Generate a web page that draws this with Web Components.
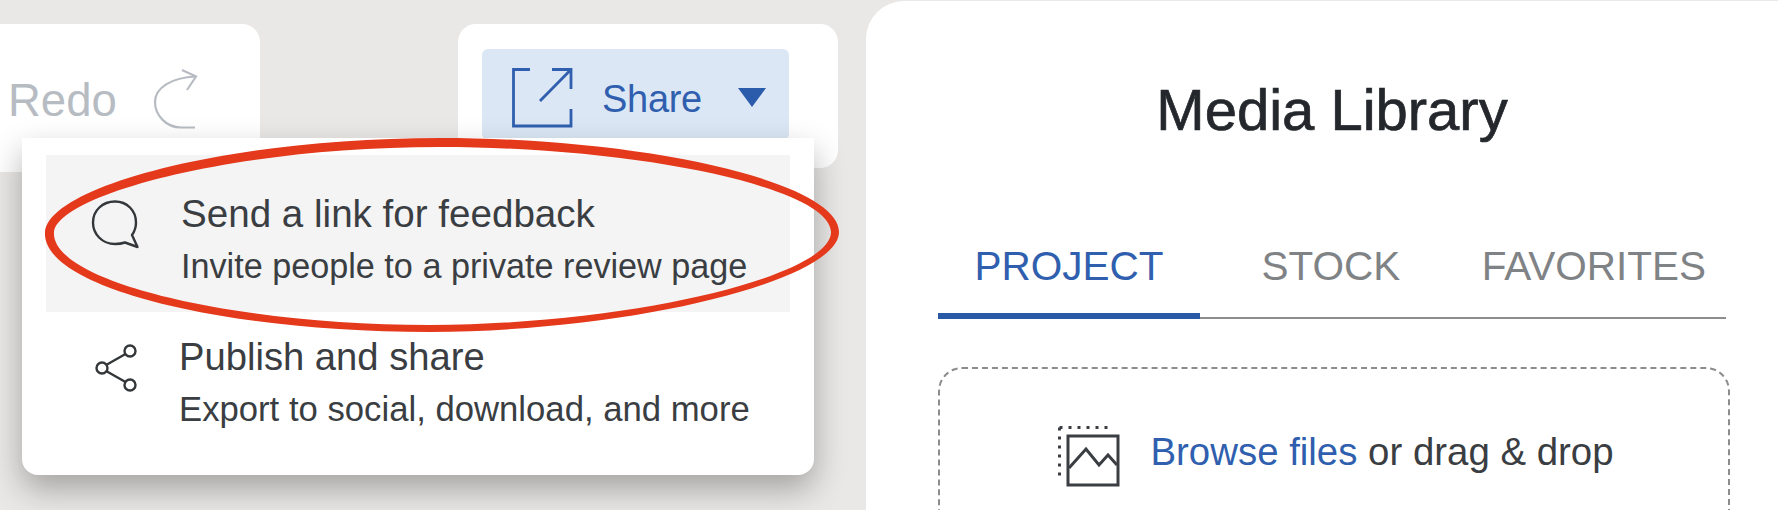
<!DOCTYPE html>
<html>
<head>
<meta charset="utf-8">
<title>Media Library</title>
<style>
  html, body { margin: 0; height: 100%; }
  body {
    background: #e9e8e6;
    overflow: hidden;
    font-family: "Liberation Sans", Arial, sans-serif;
  }
</style>
</head>
<body>
<editor-shell>
  <redo-card slot="toolbar"></redo-card>
  <share-card slot="toolbar"></share-card>
  <share-menu slot="overlay">
    <menu-item active>
      <svg slot="icon" width="52" height="52" viewBox="90 196 52 52" fill="none" stroke="#33373a" stroke-width="2.4" stroke-linejoin="round">
        <path d="M125 240.500C122 241.500 118.500 242 115 242C102.500 242 93 232.500 93 220.500C93 208.500 102.500 199.500 115 199.500C127 199.500 136 208.500 136 220.500C136 225.500 134.500 229.500 132 233L137.500 245Z"/>
      </svg>
      <span slot="title">Send a link for feedback</span>
      <span slot="sub">Invite people to a private review page</span>
    </menu-item>
    <menu-item style="--text-gap: 37px; --title-size: 38.2px; --sub-size: 34.7px">
      <svg slot="icon" width="52" height="52" viewBox="90 340 52 52" fill="none" stroke="#33373a" stroke-width="2.4">
        <circle cx="130" cy="350" r="5.500"/>
        <circle cx="102" cy="367" r="5.500"/>
        <circle cx="130" cy="384" r="5.500"/>
        <path d="M125.500 353L107 363.500M107 370.500L125.500 381"/>
      </svg>
      <span slot="title">Publish and share</span>
      <span slot="sub">Export to social, download, and more</span>
    </menu-item>
  </share-menu>
  <annotation-ring slot="overlay"></annotation-ring>
  <media-panel slot="panel"></media-panel>
</editor-shell>

<script>
class EditorShell extends HTMLElement {
  constructor() {
    super();
    this.attachShadow({ mode: "open" });
    this.shadowRoot.innerHTML = `
      <style>
        :host { display: flex; position: relative; height: 510px; overflow: hidden; }
        .left { flex: 0 0 866px; }
        .toolbar { display: flex; align-items: flex-start; gap: 198px; margin-top: 24px; }
        .right { flex: 1; min-width: 0; padding-top: 1px; }
      </style>
      <div class="left"><div class="toolbar"><slot name="toolbar"></slot></div></div>
      <div class="right"><slot name="panel"></slot></div>
      <slot name="overlay"></slot>
    `;
  }
}

class RedoCard extends HTMLElement {
  constructor() {
    super();
    this.attachShadow({ mode: "open" });
    this.shadowRoot.innerHTML = `
      <style>
        :host {
          display: flex; align-items: center; gap: 34px;
          box-sizing: border-box; width: 260px; height: 148px;
          padding: 0 0 0 8px;
          background: #fff; border-radius: 0 18px 0 0;
          color: #b7bcc3; font-size: 45.5px;
        }
        span { padding-top: 6px; }
        svg { flex: none; margin-top: 3px; }
      </style>
      <span>Redo</span>
      <svg width="48" height="64" viewBox="150 68 48 64" fill="none" stroke="#b7bcc3" stroke-width="2.200">
        <path d="M194 127.500H180C165 127.500 154 115 154 102C154 88 170 77.500 195 76.500"/>
        <path d="M181 70L195 76.500L186 90"/>
      </svg>
    `;
  }
}

class ShareCard extends HTMLElement {
  constructor() {
    super();
    this.attachShadow({ mode: "open" });
    this.shadowRoot.innerHTML = `
      <style>
        :host {
          display: block; box-sizing: border-box; width: 380px; height: 144px;
          padding: 25px 24px 28px;
          background: #fff; border-radius: 18px;
        }
        .btn {
          display: flex; align-items: center;
          box-sizing: border-box; width: 307px; height: 91px;
          padding-left: 28px;
          background: #dce7f5; border-radius: 6px;
          color: #2f5fae; font-size: 38px; letter-spacing: -.3px;
        }
        svg { margin-top: 6px; }
        .label { margin-left: 28px; margin-right: 36px; padding-top: 10px; }
        .caret { margin-top: 6px; width: 0; height: 0; border-left: 14px solid transparent; border-right: 14px solid transparent; border-top: 19px solid #2b5cab; }
      </style>
      <div class="btn">
        <svg width="64" height="64" viewBox="510 65 64 64" fill="none" stroke="#2f5fae" stroke-width="2.800">
          <path d="M530 68.500H513.500V125H571V108"/>
          <path d="M540 100L571 68.500M552 68.500H571V88"/>
        </svg>
        <span class="label">Share</span>
        <span class="caret"></span>
      </div>
    `;
  }
}

class ShareMenu extends HTMLElement {
  constructor() {
    super();
    this.attachShadow({ mode: "open" });
    this.shadowRoot.innerHTML = `
      <style>
        :host {
          position: absolute; left: 22px; top: 138px;
          box-sizing: border-box; width: 792px; height: 337px;
          padding: 17px 24px 0;
          background: #fff; border-radius: 0 0 16px 16px;
          box-shadow: 0 14px 32px rgba(0, 0, 0, .3);
        }
      </style>
      <slot></slot>
    `;
  }
}

class MenuItem extends HTMLElement {
  constructor() {
    super();
    this.attachShadow({ mode: "open" });
    this.shadowRoot.innerHTML = `
      <style>
        :host {
          display: flex; box-sizing: border-box;
          padding: 20px 0 0 44px;
          color: #3a3e42;
        }
        :host([active]) { height: 157px; padding-top: 34px; background: #f4f4f5; }
        .icon { flex: none; width: 52px; height: 52px; margin-top: 9px; margin-right: var(--text-gap, 39px); }
        .title { font-size: var(--title-size, 38.6px); line-height: 50px; white-space: nowrap; }
        .sub { font-size: var(--sub-size, 34.2px); line-height: 50px; margin-top: 2px; white-space: nowrap; }
        ::slotted(svg) { display: block; }
      </style>
      <div class="icon"><slot name="icon"></slot></div>
      <div>
        <div class="title"><slot name="title"></slot></div>
        <div class="sub"><slot name="sub"></slot></div>
      </div>
    `;
  }
}

// hand drawn ring on top of the menu, lies over everything
class AnnotationRing extends HTMLElement {
  constructor() {
    super();
    this.attachShadow({ mode: "open" });
    this.shadowRoot.innerHTML = `
      <style>
        :host { position: absolute; left: 0; top: 0; pointer-events: none; }
        svg { display: block; }
      </style>
      <svg width="866" height="340" viewBox="0 0 866 340">
        <path fill="#e5391c" fill-rule="evenodd" d="M45 232C49 186 230 138 440 138C645 138 839 182 839 232C839 279 640 331 430 332C225 332 41 288 45 232ZM54 232C58 195 232 147 440 147C640 147 830 188 831 232C832 274 640 324 430 325C235 325 50 282 54 232Z"/>
      </svg>
    `;
  }
}

class MediaPanel extends HTMLElement {
  constructor() {
    super();
    this.attachShadow({ mode: "open" });
    this.shadowRoot.innerHTML = `
      <style>
        :host {
          display: block; box-sizing: border-box; height: 560px;
          padding: 0 52px 0 72px;
          background: #fff; border-radius: 38px 0 0 0;
        }
        h1 {
          margin: 0; padding-top: 76px;
          font-size: 58px; line-height: 66px; font-weight: 400; text-align: center;
          color: #24282c; -webkit-text-stroke: .7px #24282c;
        }
        .tabs {
          display: grid; grid-template-columns: 262px 262px 264px;
          margin-top: 97px; height: 79px;
          box-sizing: border-box; border-bottom: 2px solid #8b8d8f;
        }
        .tab {
          height: 79px; box-sizing: border-box; padding-top: 3px;
          font-size: 40.5px; line-height: 46px; text-align: center;
          color: #7f8386;
        }
        .tab.on { color: #2f5fae; border-bottom: 6px solid #2a59a6; }
        .drop {
          box-sizing: border-box; height: 300px; margin-top: 48px; margin-right: -4px;
          border: 2px dashed #8a8c8e; border-radius: 24px;
          padding: 61px 0 0 4px;
          display: flex; justify-content: center; align-items: flex-start; gap: 30px;
          font-size: 38.4px; line-height: 44px; color: #3a3e42;
        }
        .drop svg { flex: none; margin-top: -5px; }
        .link { color: #2f5fae; }
      </style>
      <h1>Media Library</h1>
      <div class="tabs">
        <div class="tab on">PROJECT</div>
        <div class="tab">STOCK</div>
        <div class="tab">FAVORITES</div>
      </div>
      <div class="drop">
        <svg width="62" height="62" viewBox="1060 424 62 62" fill="none">
          <path d="M1061.500 426.500H1114M1061.500 426.500V478" stroke="#3a3e42" stroke-width="3" stroke-dasharray="3 6"/>
          <rect x="1070" y="435" width="50" height="49" stroke="#3a3e42" stroke-width="3"/>
          <path d="M1071 467L1088 448L1101 464L1110 454L1119 464" stroke="#3a3e42" stroke-width="3"/>
        </svg>
        <div><span class="link">Browse files</span> or drag &amp; drop</div>
      </div>
    `;
  }
}

customElements.define("editor-shell", EditorShell);
customElements.define("redo-card", RedoCard);
customElements.define("share-card", ShareCard);
customElements.define("share-menu", ShareMenu);
customElements.define("menu-item", MenuItem);
customElements.define("annotation-ring", AnnotationRing);
customElements.define("media-panel", MediaPanel);
</script>
</body>
</html>
